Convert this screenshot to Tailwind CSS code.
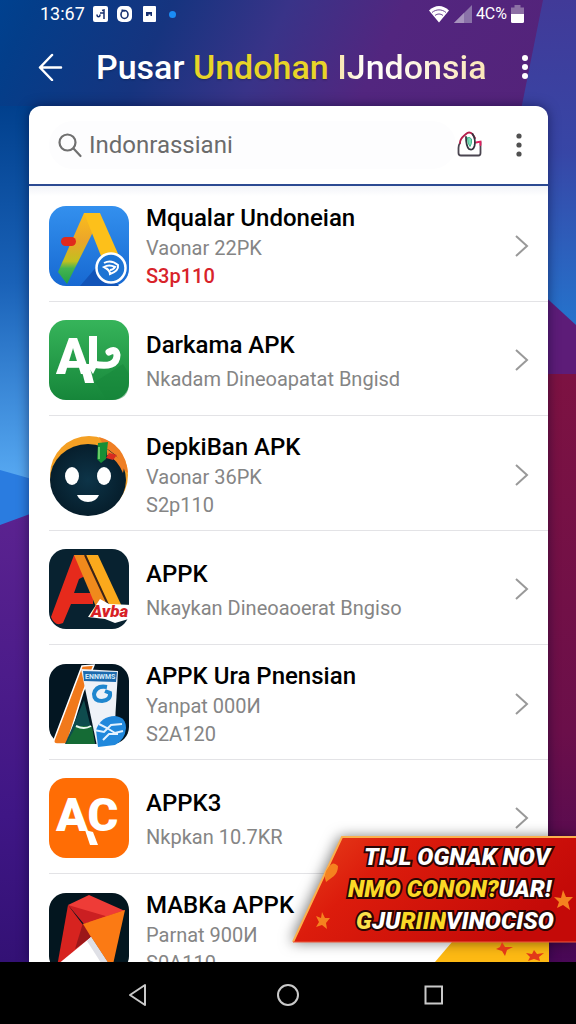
<!DOCTYPE html>
<html lang="id">
<head>
  <meta charset="UTF-8">
  <meta name="viewport" content="width=device-width, initial-scale=1.0">
  <title>Pusar Undohan Indonsia</title>
  <script src="https://cdn.jsdelivr.net/npm/@tailwindcss/browser@4"></script>
</head>
<body class="font-[Roboto,sans-serif]">
  <div class="relative isolate flex h-screen flex-col overflow-hidden bg-[#1d3a8c]">

    <!-- Wallpaper -->
    <svg class="absolute inset-0 -z-10 h-full w-full" viewBox="0 0 576 1024" preserveAspectRatio="none" aria-hidden="true">
      <defs>
        <linearGradient id="top" x1="0" x2="1" y1="0" y2="0.1">
          <stop offset="0" stop-color="#00418f"/>
          <stop offset="0.06" stop-color="#033e8a"/>
          <stop offset="0.3" stop-color="#16347f"/>
          <stop offset="0.5" stop-color="#393388"/>
          <stop offset="0.7" stop-color="#52267f"/>
          <stop offset="1" stop-color="#54237a"/>
        </linearGradient>
        <linearGradient id="left" x1="0" x2="0" y1="0" y2="1">
          <stop offset="0" stop-color="#01408d"/>
          <stop offset="0.45" stop-color="#1a62b8"/>
          <stop offset="1" stop-color="#5db0f8"/>
        </linearGradient>
        <linearGradient id="leftLow" x1="0" x2="0" y1="0" y2="1">
          <stop offset="0" stop-color="#5c2390"/>
          <stop offset="0.6" stop-color="#3f1685"/>
          <stop offset="1" stop-color="#2e0f6e"/>
        </linearGradient>
        <linearGradient id="right" x1="0" x2="0" y1="0" y2="1">
          <stop offset="0" stop-color="#413a98"/>
          <stop offset="0.45" stop-color="#3746a6"/>
          <stop offset="1" stop-color="#2377d0"/>
        </linearGradient>
        <linearGradient id="rightLow" x1="0" x2="0" y1="0" y2="1">
          <stop offset="0" stop-color="#7d1242"/>
          <stop offset="0.55" stop-color="#6b0f4a"/>
          <stop offset="1" stop-color="#3f0659"/>
        </linearGradient>
      </defs>
      <rect width="576" height="120" fill="url(#top)"/>
      <rect y="106" width="60" height="394" fill="url(#left)"/>
      <path d="M0 470 60 487V530H0Z" fill="#2a7ce0"/>
      <path d="M0 525 60 503V1024H0Z" fill="url(#leftLow)"/>
      <path d="M543 0H576V340H520V115Z" fill="url(#right)"/>
      <path d="M540 292 576 325V390H540Z" fill="#5d1c78"/>
      <path d="M540 374H576V1024H540Z" fill="url(#rightLow)"/>
    </svg>

    <!-- Status bar -->
    <div class="flex h-7 shrink-0 items-center justify-between pr-13 pl-10 text-lg text-white">
      <div class="flex items-center gap-2">
        <span>13:67</span>
        <svg class="h-4 w-[15px]" viewBox="0 0 15 16" fill="none" stroke="#17306f" stroke-width="1.5"><rect width="15" height="16" rx="2" fill="#fff" stroke="none"/><path d="M4 8.500c0 3 3 3 3 0M7 7h4v6M9 4.500l2-.5v3"/></svg>
        <svg class="h-4 w-[18px]" viewBox="0 0 18 16" fill="none" stroke="#17306f" stroke-width="1.6"><rect x="1" width="15" height="16" rx="5" fill="#fff" stroke="none"/><ellipse cx="8.500" cy="8.500" rx="3.500" ry="4"/><path d="M5.500 4 9 5"/></svg>
        <svg class="h-4 w-[15px]" viewBox="0 0 15 16"><rect x="1" width="13" height="16" rx="1" fill="#fff"/><path d="M4 10V6h6v4H8.500V8.500h-2V10Z" fill="#17306f"/></svg>
        <span class="ml-1 size-[7px] rounded-full bg-[#1a8cf5]"></span>
      </div>
      <div class="flex items-center gap-1">
        <svg class="h-[18px] w-[22px]" viewBox="0 0 22 18"><path d="M1 5.500C7-.5 15-.5 21 5.500L11 17.500Z" fill="#fff"/><path d="M4 7.500c4-3.500 10-3.500 14 0M7 10.500c2.500-2 5.500-2 8 0" fill="none" stroke="#6b4593" stroke-width="1"/></svg>
        <svg class="h-[18px] w-[18px]" viewBox="0 0 18 18"><path d="M0 18 18 0V18Z" fill="#8a72a8"/><path d="M0 18 10 8V18Z" fill="#a794bd"/></svg>
        <span class="text-base">4C%</span>
        <svg class="h-[18px] w-[13px]" viewBox="0 0 13 18"><path d="M0 2.500H3.500V0h6V2.500H13V9H0Z" fill="#8d70a5"/><path d="M0 9H13v7.500q0 1.500-1.500 1.500h-10Q0 18 0 16.500Z" fill="#fff"/></svg>
      </div>
    </div>

    <!-- Title bar -->
    <header class="flex h-[78px] shrink-0 items-center pr-8 pl-9 text-white">
      <button type="button" aria-label="Kembali" class="w-[60px] shrink-0">
        <svg class="h-7 w-7" viewBox="0 0 28 28" fill="none" stroke="currentColor" stroke-width="2.500" stroke-linecap="round" stroke-linejoin="round"><path d="M16 2 4 14.500 16 27M4 14.500H25"/></svg>
      </button>
      <h1 class="min-w-0 flex-1 text-[34px] leading-10 font-medium whitespace-nowrap text-shadow-sm">Pusar <span class="text-[#e8d428]">Undohan</span> <span class="bg-linear-to-r from-[#f7e3a8] via-white via-20% to-[#fbe6b8] bg-clip-text text-transparent text-shadow-none">IJndonsia</span></h1>
      <button type="button" aria-label="Menu" class="shrink-0">
        <svg class="h-7 w-8" viewBox="0 0 32 28" fill="currentColor"><circle cx="13" cy="5" r="3"/><circle cx="13" cy="14" r="3"/><circle cx="13" cy="23" r="3"/></svg>
      </button>
    </header>

    <!-- Card -->
    <main class="mr-7 ml-[29px] flex min-h-0 flex-1 flex-col overflow-hidden rounded-t-xl bg-white shadow-[0_0_12px_rgba(0,0,40,0.5)]">
      <div class="flex h-20 shrink-0 items-center border-b-2 border-[#2c4a92] pr-3 pl-5 text-[#6b6b6b]">
        <label class="flex min-w-0 flex-1 items-center gap-1 rounded-full bg-[#fdfdfe] pl-2">
          <svg class="h-7 w-7 shrink-0" viewBox="0 0 28 28" fill="none" stroke="#707070" stroke-width="2.200" stroke-linecap="round"><circle cx="10.500" cy="11.500" r="8"/><path d="M16.500 17.500 23.500 25"/></svg>
          <input type="text" value="Indonrassiani" aria-label="Cari aplikasi" class="h-12 w-full min-w-0 text-2xl outline-none">
        </label>
        <button type="button" aria-label="Bagikan" class="shrink-0">
          <svg class="h-7 w-7" viewBox="0 0 28 28" fill="none" stroke-linecap="round" stroke-width="1.800"><path d="M4 12Q2.500 14 2.500 17V22Q2.500 24.500 5 24.500H22.500Q24.500 24.500 24.500 22V11" stroke="#4a4550"/><path d="M4 12C4 7 8 5 10 3Q13 0 16.500 3L19 7" stroke="#b51f4b"/><path d="M20 11.500 24.500 10.500V14" stroke="#e02060"/><path d="M10 6Q10 15 13 18Q17 20 18.500 15Q20 8 16.500 3" stroke="#35353f"/><path d="M11.500 7Q11.500 13 14 15.500Q16 13 15.500 8Q13 5 11.500 7Z" fill="#7fdcb8" stroke="#3cb68a" stroke-width="1"/></svg>
        </button>
        <button type="button" aria-label="Opsi" class="ml-5 shrink-0">
          <svg class="h-7 w-8" viewBox="0 0 32 28" fill="#505050"><circle cx="15" cy="5" r="2.600"/><circle cx="15" cy="14" r="2.600"/><circle cx="15" cy="23" r="2.600"/></svg>
        </button>
      </div>

      <ul class="min-h-0 flex-1 overflow-hidden bg-linear-to-b from-[#f1f3f8] to-white to-[10px]">
        <li class="ml-5 border-b border-[#e3e3e6]">
          <a href="#" class="flex h-[115px] items-center pt-1 pr-4">
            <svg class="size-20 shrink-0 overflow-visible" viewBox="0 0 80 80">
              <defs>
                <linearGradient id="blue" x1="0" x2="0" y1="0" y2="1"><stop offset="0" stop-color="#3390ee"/><stop offset="1" stop-color="#1769d2"/></linearGradient>
                <linearGradient id="leg" x1="0" x2="0" y1="0" y2="1"><stop offset="0" stop-color="#fbbd1c"/><stop offset="0.4" stop-color="#eba52a"/><stop offset="0.68" stop-color="#c2c01f"/><stop offset="0.78" stop-color="#44b450"/><stop offset="1" stop-color="#22a045"/></linearGradient>
              </defs>
              <rect width="80" height="80" rx="17" fill="url(#blue)"/>
              <path d="M31 80 50 58 70 80Z" fill="#1254b8"/>
              <path d="M35 7H51L43 28 18 78 9 66Z" fill="url(#leg)"/>
              <path d="M35 7H51L70 50 56 60Z" fill="#fdc01a"/>
              <rect x="12" y="31" width="15" height="9" rx="4.500" fill="#e02a1c"/>
              <circle cx="62" cy="62" r="14.500" fill="#1d74d4" stroke="#fff" stroke-width="2.500"/>
              <path d="M55 57Q62 53 69 59Q70 65 61 68Q61 64 55 61Q60 58 66 61Q64 64 61 64" fill="none" stroke="#fff" stroke-width="2"/>
            </svg>
            <div class="ml-[17px] min-w-0 flex-1 text-xl leading-7 text-[#858585]">
              <h2 class="text-2xl leading-8 font-medium text-black">Mqualar Undoneian</h2>
              <p>Vaonar 22PK</p>
              <p class="font-medium text-[#d8232a]">S3p110</p>
            </div>
            <svg class="h-6 w-5 shrink-0" viewBox="0 0 20 24" fill="none" stroke="#999" stroke-width="2"><path d="M4 2 15 12 4 22"/></svg>
          </a>
        </li>

        <li class="ml-5 border-b border-[#e3e3e6]">
          <a href="#" class="flex h-[113px] items-center pt-0.5 pr-4">
            <svg class="size-20 shrink-0" viewBox="0 0 80 80">
              <defs><linearGradient id="green" x1="0" x2="0" y1="0" y2="1"><stop offset="0" stop-color="#36b45a"/><stop offset="1" stop-color="#16863a"/></linearGradient></defs>
              <rect width="80" height="80" rx="17" fill="url(#green)"/>
              <path d="M46 62 74 44 80 54V63Q80 80 63 80H58Z" fill="#15853a" opacity=".5"/>
              <text x="7" y="54" font-family="Roboto, sans-serif" font-size="50" font-weight="900" fill="#fff">A</text>
              <path d="M31 44H40L45 63H36Z" fill="#fff"/>
              <path d="M40 16H48V46L44 54 40 48Z" fill="#fff"/>
              <path d="M44 44Q68 49 68 35Q67 28 60 32" fill="none" stroke="#fff" stroke-width="7" stroke-linecap="round"/>
            </svg>
            <div class="ml-[17px] min-w-0 flex-1 text-xl leading-7 text-[#858585]">
              <h2 class="text-2xl leading-9 font-medium text-black">Darkama APK</h2>
              <p class="mt-0.5">Nkadam Dineoapatat Bngisd</p>
            </div>
            <svg class="h-6 w-5 shrink-0" viewBox="0 0 20 24" fill="none" stroke="#999" stroke-width="2"><path d="M4 2 15 12 4 22"/></svg>
          </a>
        </li>

        <li class="ml-5 border-b border-[#e3e3e6]">
          <a href="#" class="flex h-[114px] items-center pt-1 pr-4">
            <svg class="size-20 shrink-0 overflow-visible" viewBox="0 0 80 80">
              <defs><radialGradient id="face"><stop offset="0" stop-color="#0d3448"/><stop offset="1" stop-color="#061e2c"/></radialGradient></defs>
              <circle cx="40" cy="40" r="39" fill="#f4a024"/>
              <path d="M50 2Q76 9 79 38L62 24Z" fill="#ef7f25"/>
              <ellipse cx="39" cy="45" rx="38" ry="36" fill="url(#face)"/>
              <path d="M58 14 76 28 74 38Q68 24 58 20Z" fill="#ef7f25"/>
              <path d="M49 8 59 7 57 24 52 28 48 24Z" fill="#178f36"/><path d="M50 12V24" stroke="#67ca67" stroke-width="2"/>
              <path d="M57 23 60 18 68 20 64 25Z" fill="#d82c20"/>
              <ellipse cx="23" cy="41" rx="7" ry="9" fill="#fff"/>
              <ellipse cx="55" cy="41" rx="7" ry="9" fill="#fff"/>
              <path d="M28 60H50Q47 67 39 67Q31 67 28 60Z" fill="#fff"/>
            </svg>
            <div class="ml-[17px] min-w-0 flex-1 text-xl leading-7 text-[#858585]">
              <h2 class="text-2xl leading-8 font-medium text-black">DepkiBan APK</h2>
              <p>Vaonar 36PK</p>
              <p>S2p110</p>
            </div>
            <svg class="h-6 w-5 shrink-0" viewBox="0 0 20 24" fill="none" stroke="#999" stroke-width="2"><path d="M4 2 15 12 4 22"/></svg>
          </a>
        </li>

        <li class="ml-5 border-b border-[#e3e3e6]">
          <a href="#" class="flex h-[113px] items-center pt-0.5 pr-4">
            <svg class="size-20 shrink-0 overflow-visible" viewBox="0 0 80 80">
              <rect width="80" height="80" rx="17" fill="#082230"/>
              <path d="M25 6H36L42 24 30 30 25 44H44V55H22L14 74Q6 78 2 68Z" fill="#e62a1c"/>
              <path d="M25 6H37L62 62 48 60Z" fill="#f08a1c"/>
              <path d="M37 6H49L75 62H62Z" fill="#fba91c"/>
              <path d="M36 6 61 60" stroke="#3c2418" stroke-width="2"/>
              <path d="M39 68 51 50 60 55 84 56 83 69 66 74 56 70Z" fill="#fff"/>
              <text x="42" y="68" font-family="Roboto, sans-serif" font-size="17" font-weight="900" font-style="italic" fill="#d81f26">Avba</text>
            </svg>
            <div class="ml-[17px] min-w-0 flex-1 text-xl leading-7 text-[#858585]">
              <h2 class="text-2xl leading-9 font-medium text-black">APPK</h2>
              <p class="mt-0.5">Nkaykan Dineoaoerat Bngiso</p>
            </div>
            <svg class="h-6 w-5 shrink-0" viewBox="0 0 20 24" fill="none" stroke="#999" stroke-width="2"><path d="M4 2 15 12 4 22"/></svg>
          </a>
        </li>

        <li class="ml-5 border-b border-[#e3e3e6]">
          <a href="#" class="flex h-[114px] items-center pt-1 pr-4">
            <svg class="size-20 shrink-0 overflow-visible" viewBox="0 0 80 80">
              <rect width="80" height="80" rx="17" fill="#031622"/>
              <path d="M33 2 45 1 34 28 18 80H8Q4 80 5 76Z" fill="#f1791b" stroke="#fff" stroke-width="1.500"/>
              <path d="M35 36 16 80H46Z" fill="#0e4b4d"/>
              <path d="M27 62H43L46 80H17Z" fill="#156b35"/>
              <path d="M27 62Q35 66 42 62" fill="none" stroke="#e9f6ef" stroke-width="2"/>
              <path d="M32 5 69 7 66 58 48 82Z" fill="#eef2f8"/>
              <path d="M34 7 68 8 67 18 35 17Z" fill="#1c6aae"/>
              <text x="36" y="15" font-family="Roboto, sans-serif" font-size="7" font-weight="700" fill="#d6eafa">ENNWMS</text>
              <path d="M58 23Q47 21 45 30Q45 37 53 37Q62 36 61 29L56 27" fill="none" stroke="#1f87cf" stroke-width="4"/>
              <path d="M47 66Q52 52 66 52Q77 53 77 64Q76 76 66 81L49 83Z" fill="#2088dc"/>
              <path d="M45 66 55 68 62 61 73 60M50 60 58 64 66 69 74 67M54 76 60 70H69" fill="none" stroke="#e3f2ff" stroke-width="2"/>
            </svg>
            <div class="ml-[17px] min-w-0 flex-1 text-xl leading-7 text-[#858585]">
              <h2 class="text-2xl leading-8 font-medium text-black">APPK Ura Pnensian</h2>
              <p>Yanpat 000И</p>
              <p>S2A120</p>
            </div>
            <svg class="h-6 w-5 shrink-0" viewBox="0 0 20 24" fill="none" stroke="#999" stroke-width="2"><path d="M4 2 15 12 4 22"/></svg>
          </a>
        </li>

        <li class="ml-5 border-b border-[#e3e3e6]">
          <a href="#" class="flex h-[113px] items-center pt-0.5 pr-4">
            <svg class="size-20 shrink-0" viewBox="0 0 80 80">
              <rect width="80" height="80" rx="17" fill="#ff6d05"/>
              <text x="7" y="53" font-family="Roboto, sans-serif" font-size="47" font-weight="900" fill="#fff">AC</text>
              <path d="M36 52 44 54 49 67H41Z" fill="#fff"/>
            </svg>
            <div class="ml-[17px] min-w-0 flex-1 text-xl leading-7 text-[#858585]">
              <h2 class="text-2xl leading-9 font-medium text-black">APPK3</h2>
              <p class="mt-0.5">Nkpkan 10.7KR</p>
            </div>
            <svg class="h-6 w-5 shrink-0" viewBox="0 0 20 24" fill="none" stroke="#999" stroke-width="2"><path d="M4 2 15 12 4 22"/></svg>
          </a>
        </li>

        <li class="ml-5">
          <a href="#" class="flex h-[114px] items-center pt-1 pr-4">
            <svg class="size-20 shrink-0" viewBox="0 0 80 80">
              <rect width="80" height="80" rx="17" fill="#03161f"/>
              <path d="M19 12 43 44 8 74Z" fill="#d7231f"/>
              <path d="M19 12 40 2 76 18 42 30Z" fill="#ee3c37"/>
              <path d="M19 12 35 31 76 17 60 24Z" fill="#cb1f22"/>
              <path d="M34 30 26 56 43 44Z" fill="#9c1719"/>
              <path d="M34 31 76 17 63 76 42 44Z" fill="#fb7a14"/>
              <path d="M8 72 42 44 63 76V80H8Z" fill="#fff"/>
              <path d="M42 44 63 76H56L38 48Z" fill="#dfe0e6"/>
            </svg>
            <div class="ml-[17px] min-w-0 flex-1 text-xl leading-7 text-[#858585]">
              <h2 class="text-2xl leading-8 font-medium text-black">MABKa APPK</h2>
              <p>Parnat 900И</p>
              <p>S0A110</p>
            </div>
          </a>
        </li>
      </ul>
    </main>

    <!-- Promo banner, over the list -->
    <aside class="absolute right-0 bottom-[62px] h-[126px] w-[284px]">
      <svg class="absolute inset-0 h-full w-full overflow-visible" viewBox="0 0 284 126" aria-hidden="true">
        <defs>
          <linearGradient id="promo" x1="0" x2="1" y1="0" y2="0.4"><stop offset="0" stop-color="#e8431c"/><stop offset="0.35" stop-color="#dc1c0c"/><stop offset="1" stop-color="#c40a08"/></linearGradient>
        </defs>
        <path d="M160 106H257V126H143Z" fill="#fdb913"/>
        <path d="M50 1H284V106H1Z" fill="url(#promo)" class="drop-shadow-[-2px_0_7px_rgba(0,0,0,0.55)]"/>
        <path d="M284 1H50L1 106" fill="none" stroke="#fbb04e" stroke-width="2"/>
        <path d="M1 106H284" stroke="#ef5a3c" stroke-width="1"/>
        <g fill="#f5821f">
          <path d="M30 76 33 82 38 82 34 87 35 93 30 89 24 91 27 86 24 80 29 82Z"/>
          <path d="M36 32Q41 24 46 30Q46 36 42 40L34 46Q31 38 36 32Z"/>
          <path d="M271 54 274 61 281 61 276 66 278 74 271 69 265 72 267 66 262 61 269 62Z"/>
        </g>
        <g fill="#e23818">
          <path d="M210 106 213 111 221 111 215 114 213 120 210 115 204 113 208 111Z"/>
          <path d="M242 114 245 118 252 117 247 121 248 125 242 123 236 125 238 121 234 117 240 118Z"/>
        </g>
      </svg>
      <p class="relative flex h-[105px] flex-col justify-center text-2xl leading-8 font-black whitespace-nowrap text-white italic [-webkit-text-stroke:4px_#2a0503] [paint-order:stroke_fill]">
        <span class="pl-18">TIJL OGNAK NOV</span>
        <span class="pl-14"><span class="text-[#fbd926]">NMO CONON?</span>UAR!</span>
        <span class="pl-16"><span class="text-[#fbe04a]">G</span>JU<span class="text-[#fbd926]">RIIN</span>VINOCISO</span>
      </p>
    </aside>

    <!-- System navigation -->
    <nav class="flex h-[62px] shrink-0 items-center justify-center gap-[118px] bg-black pt-1 text-[#c9c9c9]">
      <button type="button" aria-label="Kembali"><svg class="h-7 w-7" viewBox="0 0 28 28" fill="none" stroke="currentColor" stroke-width="2" stroke-linejoin="round"><path d="M17 4V24L2 14Z"/></svg></button>
      <button type="button" aria-label="Beranda"><svg class="h-7 w-7" viewBox="0 0 28 28" fill="none" stroke="currentColor" stroke-width="2"><circle cx="14" cy="14" r="10"/></svg></button>
      <button type="button" aria-label="Terbaru"><svg class="h-7 w-7" viewBox="0 0 28 28" fill="none" stroke="currentColor" stroke-width="2"><path d="M5.500 5.500H22V22.500H5.500Z"/></svg></button>
    </nav>
  </div>
</body>
</html>
